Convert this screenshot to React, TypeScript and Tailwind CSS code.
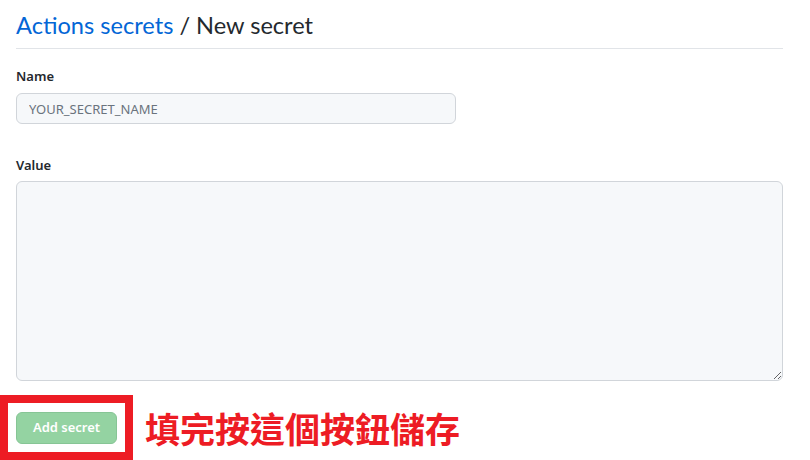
import React from "react";

const App = () => {
  return (
    <div className="w-[810px] h-[460px] bg-white overflow-hidden font-['Segoe_UI','Noto_Sans',sans-serif] text-[#24292e]">
      <div className="px-4">
        <h1 className="h-[49px] pt-[7px] text-[23.6px] leading-[36px] font-normal border-b border-[#e1e4e8] mr-[11px] font-['Lato',sans-serif]">
          <span className="text-[#0366d6]">Actions secrets</span> / New secret
        </h1>

        <div className="pt-[17px]">
          <label className="block text-[13px] font-semibold leading-5">Name</label>
          <input
            className="mt-[7px] w-[440px] h-[31px] px-3 text-[13px] bg-[#f6f8fa] border border-[#d1d5da] rounded-[6px] placeholder:text-[#6a737d] outline-none"
            placeholder="YOUR_SECRET_NAME"
          />
        </div>

        <div className="pt-[31px]">
          <label className="block text-[13px] font-semibold leading-5">Value</label>
          <textarea className="mt-[6px] block w-[767px] h-[200px] bg-[#f6f8fa] border border-[#d1d5da] rounded-[6px] outline-none" />
        </div>
      </div>

      <div className="flex items-center mt-[14px]">
        <div className="w-[133px] h-[65px] border-[8px] border-[#ed1c24] flex items-center pl-[8px]">
          <button className="w-[101px] h-[32px] rounded-[6px] bg-[#94d3a2] border border-[#86c595] text-white text-[13px] font-semibold">
            Add secret
          </button>
        </div>
        <span className="ml-[12px] text-[35px] leading-none font-bold text-[#ed1c24] font-['Noto_Sans_CJK_TC',sans-serif]">
          填完按這個按鈕儲存
        </span>
      </div>
    </div>
  );
};

export default App;
